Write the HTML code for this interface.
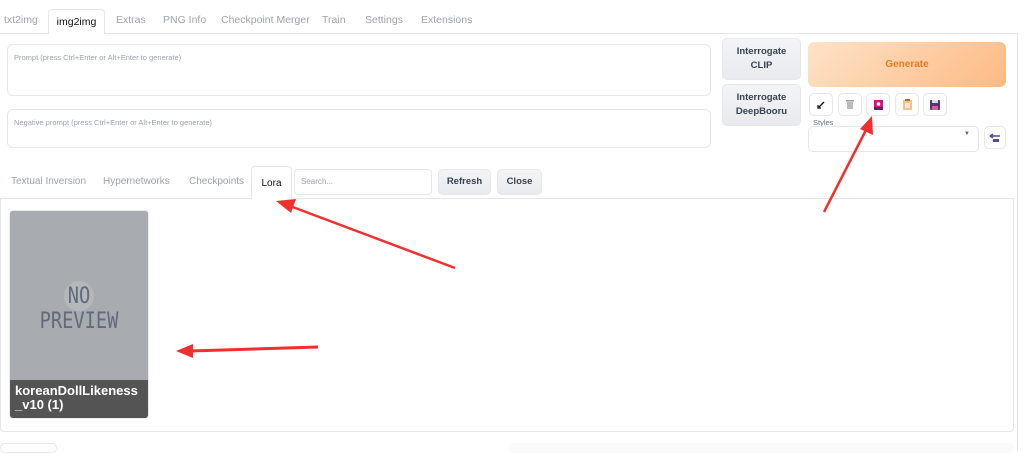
<!DOCTYPE html>
<html><head><meta charset="utf-8"><style>
*{box-sizing:border-box;margin:0;padding:0}
body{width:1024px;height:451px;overflow:hidden;background:#fff;font-family:"Liberation Sans",sans-serif;position:relative;color:#374151}
.a{position:absolute}
.tab{position:absolute;top:8px;height:25px;font-size:10.5px;color:#9ca3af;line-height:25px}
.box{position:absolute;border:1px solid #e5e7eb;border-radius:6px;background:#fff;font-size:7.5px;color:#9ca3af;padding:8px 6px}
.btn{position:absolute;background:linear-gradient(#f3f4f6,#e9eaee);border:1px solid #e5e7eb;border-radius:5px;font-size:9.5px;font-weight:bold;color:#374151;text-align:center;display:flex;align-items:center;justify-content:center;line-height:14px}
.ib{position:absolute;top:93px;width:24px;height:23px;border:1px solid #e5e7eb;border-radius:5px;background:#fff;display:flex;align-items:center;justify-content:center}
</style></head><body>
<div class="a" style="left:0;top:33px;width:1018px;height:1px;background:#e5e7eb"></div>
<div class="tab" style="left:4px">txt2img</div>
<div class="a" style="left:48px;top:9px;width:57px;height:25px;border:1px solid #e5e7eb;border-bottom:none;border-radius:4px 4px 0 0;background:#fff;font-size:10.5px;color:#111;line-height:24px;text-align:center">img2img</div>
<div class="tab" style="left:116px">Extras</div>
<div class="tab" style="left:163px">PNG Info</div>
<div class="tab" style="left:221px">Checkpoint Merger</div>
<div class="tab" style="left:322px">Train</div>
<div class="tab" style="left:365px">Settings</div>
<div class="tab" style="left:421px">Extensions</div>
<div class="a" style="left:1017px;top:33px;width:1px;height:418px;background:#e5e7eb"></div>

<div class="box" style="left:7px;top:44px;width:704px;height:52px">Prompt (press Ctrl+Enter or Alt+Enter to generate)</div>
<div class="box" style="left:7px;top:109px;width:704px;height:39px">Negative prompt (press Ctrl+Enter or Alt+Enter to generate)</div>

<div class="btn" style="left:722px;top:38px;width:79px;height:42px">Interrogate<br>CLIP</div>
<div class="btn" style="left:722px;top:84px;width:79px;height:42px">Interrogate<br>DeepBooru</div>
<div class="a" style="left:808px;top:42px;width:198px;height:45px;border-radius:6px;background:linear-gradient(135deg,#fde3c8,#fdba84);color:#ea7a1d;font-size:10px;font-weight:bold;text-align:center;line-height:45px">Generate</div>

<div class="ib" style="left:809px"><svg width="10" height="10"><path d="M8 2L3 7M2 5v3h3" stroke="#111" stroke-width="1.3" fill="none"/></svg></div>
<div class="ib" style="left:838px"><svg width="10" height="11"><rect x="1" y="1" width="8" height="1.5" fill="#999"/><rect x="2" y="3" width="6" height="7" fill="#bbb"/></svg></div>
<div class="ib" style="left:866px"><svg width="9" height="10"><rect x="0" y="0" width="9" height="10" fill="#d4147a"/><circle cx="4.5" cy="4" r="1.8" fill="#fff"/><rect x="0" y="7" width="9" height="3" fill="#6b1f6b"/></svg></div>
<div class="ib" style="left:895px"><svg width="9" height="11"><rect x="0" y="1" width="9" height="10" fill="#f3c48a"/><rect x="2" y="0" width="5" height="2" fill="#b07030"/><rect x="2" y="4" width="5" height="5" fill="#fff" opacity=".6"/></svg></div>
<div class="ib" style="left:923px"><svg width="10" height="10"><rect x="0" y="0" width="10" height="10" rx="1" fill="#4b3a7a"/><rect x="2" y="0" width="6" height="3" fill="#ddd"/><rect x="2" y="6" width="6" height="4" fill="#e05a9a"/></svg></div>

<div class="a" style="left:813px;top:118px;font-size:7.5px;color:#6b7280">Styles</div>
<div class="a" style="left:808px;top:126px;width:171px;height:26px;border:1px solid #e5e7eb;border-radius:5px"></div>
<div class="a" style="left:964px;top:131px;font-size:6px;color:#666">▼</div>
<div class="a" style="left:984px;top:126px;width:22px;height:23px;border:1px solid #e5e7eb;border-radius:5px;display:flex;align-items:center;justify-content:center"><svg width="12" height="10"><path d="M1 3h10M1 3l3-2M1 3l3 2" stroke="#5a4a8a" stroke-width="1.5" fill="none"/><rect x="4" y="6" width="6" height="3" fill="#5a4a8a"/></svg></div>

<div class="tab" style="left:11px;top:169px;font-size:10px">Textual Inversion</div>
<div class="tab" style="left:103px;top:169px;font-size:10px">Hypernetworks</div>
<div class="tab" style="left:189px;top:169px;font-size:10px">Checkpoints</div>
<div class="a" style="left:0;top:198px;width:1014px;height:234px;border:1px solid #e5e7eb;border-radius:0 0 4px 4px"></div>
<div class="a" style="left:251px;top:166px;width:41px;height:33px;border:1px solid #e5e7eb;border-bottom:none;border-radius:4px 4px 0 0;background:#fff;font-size:10px;color:#111;line-height:33px;text-align:center">Lora</div>
<div class="a" style="left:294px;top:169px;width:138px;height:26px;border:1px solid #e5e7eb;border-radius:4px;font-size:8px;color:#9ca3af;line-height:24px;padding-left:6px">Search...</div>
<div class="btn" style="left:438px;top:169px;width:53px;height:26px">Refresh</div>
<div class="btn" style="left:497px;top:169px;width:45px;height:26px">Close</div>

<div class="a" style="left:10px;top:211px;width:138px;height:207px;border-radius:3px;background:#a8abaf;overflow:hidden;box-shadow:0 0 1px #888">
 <div class="a" style="left:54px;top:70px;width:30px;height:30px;border-radius:50%;background:#b4b7bb"></div>
 <div class="a" style="left:0;top:73px;width:138px;text-align:center;font-family:'DejaVu Sans Mono',monospace;font-size:22px;color:#606b7c;line-height:25px;transform:scaleX(0.85)">NO<br>PREVIEW</div>
 <div class="a" style="left:0;top:169px;width:138px;height:38px;background:#545454;color:#fff;font-size:13px;font-weight:bold;line-height:14px;padding:4px 5px">koreanDollLikeness _v10 (1)</div>
</div>

<div class="a" style="left:0;top:443px;width:57px;height:10px;border:1px solid #e5e7eb;border-radius:5px"></div>
<div class="a" style="left:508px;top:443px;width:506px;height:10px;background:#f9fafb;border-radius:5px"></div>

<svg class="a" style="left:0;top:0" width="1024" height="451">
 <path d="M455 268L290 206" stroke="#f03030" stroke-width="2.5"/><path d="M276 201L296 199L291 213Z" fill="#f03030"/>
 <path d="M318 347L190 351" stroke="#f03030" stroke-width="3"/><path d="M176 351L193 344L193 358Z" fill="#f03030"/>
 <path d="M824 212L866 130" stroke="#f03030" stroke-width="2.5"/><path d="M872 116L873 135L860 129Z" fill="#f03030"/>
</svg>
</body></html>
